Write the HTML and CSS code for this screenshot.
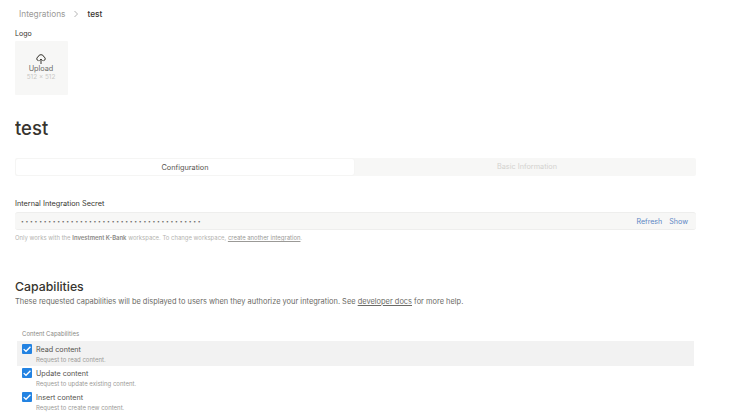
FILE: index.html
```html
<!DOCTYPE html>
<html lang="en">
<head>
<meta charset="utf-8">
<title>test</title>
<link rel="stylesheet" href="styles.css">
</head>
<body>
<div class="page">
  <nav class="crumbs">
    <span class="crumb-link">Integrations</span>
    <svg class="crumb-sep" width="6" height="8" viewBox="0 0 6 8"><path d="M1.5 1l3 3-3 3" fill="none" stroke="#aaa" stroke-width="0.9"/></svg>
    <span class="crumb-current">test</span>
  </nav>
  <div class="logo-label">Logo</div>
  <div class="logo-box">
    <svg class="upload-icon" width="10" height="11" viewBox="0 0 10 11"><path d="M2.7 6.6H2.4a1.9 1.9 0 0 1-.3-3.7A3 3 0 0 1 7.9 2.9a1.9 1.9 0 0 1-.3 3.7H7.3M5 10V5.2M3.4 6.7 5 5.1l1.6 1.6" fill="none" stroke="#37352f" stroke-width="1"/></svg>
    <span class="upload-text">Upload</span>
    <span class="upload-size">512 x 512</span>
  </div>
  <h1 class="title">test</h1>
  <div class="tabs">
    <div class="tab tab-active">Configuration</div>
    <div class="tab tab-idle">Basic Information</div>
  </div>
  <div class="field-label">Internal Integration Secret</div>
  <div class="secret">
    <span class="dots">••••••••••••••••••••••••••••••••••••••••</span>
    <span class="secret-actions"><span>Refresh</span><span>Show</span></span>
  </div>
  <p class="hint">Only works with the <b>Investment K-Bank</b> workspace. To change workspace, <u>create another integration</u>.</p>
  <h2 class="section">Capabilities</h2>
  <p class="section-desc">These requested capabilities will be displayed to users when they authorize your integration. See <u>developer docs</u> for more help.</p>
  <div class="group-label">Content Capabilities</div>
  <div class="cap cap-hover">
    <span class="check"><svg width="10" height="10" viewBox="0 0 9 9"><path d="M1.5 4.6 3.6 6.6 7.6 2.4" fill="none" stroke="#fff" stroke-width="1.2"/></svg></span>
    <div class="cap-text"><div class="cap-name">Read content</div><div class="cap-desc">Request to read content.</div></div>
  </div>
  <div class="cap">
    <span class="check"><svg width="10" height="10" viewBox="0 0 9 9"><path d="M1.5 4.6 3.6 6.6 7.6 2.4" fill="none" stroke="#fff" stroke-width="1.2"/></svg></span>
    <div class="cap-text"><div class="cap-name">Update content</div><div class="cap-desc">Request to update existing content.</div></div>
  </div>
  <div class="cap">
    <span class="check"><svg width="10" height="10" viewBox="0 0 9 9"><path d="M1.5 4.6 3.6 6.6 7.6 2.4" fill="none" stroke="#fff" stroke-width="1.2"/></svg></span>
    <div class="cap-text"><div class="cap-name">Insert content</div><div class="cap-desc">Request to create new content.</div></div>
  </div>
</div>
</body>
</html>
```
FILE: styles.css
```css
html, body {
  margin: 0;
  padding: 0;
  background: #fff;
  overflow: hidden;
}
body {
  font-family: Inter, "Liberation Sans", sans-serif;
  color: #37352f;
}
.page {
  width: 681px;
  height: 420px;
  margin-left: 15px;
  overflow: hidden;
}
.crumbs {
  display: flex;
  align-items: center;
  height: 14px;
  margin-top: 7px;
  padding-left: 4px;
  font-size: 8.3px;
  line-height: 14px;
}
.crumb-link { color: #9b9a97; }
.crumb-sep { margin: 0 8px 0 8px; }
.crumb-current { font-weight: 500; }
.logo-label {
  margin-top: 7px;
  font-size: 7px;
  line-height: 12px;
}
.logo-box {
  width: 53px;
  height: 54px;
  margin-top: 1px;
  background: #f7f7f6;
  border-radius: 1px;
  display: flex;
  flex-direction: column;
  align-items: center;
  padding-top: 13px;
  box-sizing: border-box;
}
.upload-icon { display: block; margin-right: 2px; }
.upload-text { font-size: 7.3px; line-height: 9px; margin: -1px 1px 0 0; color: #6b6a66; }
.upload-size { font-size: 6.4px; line-height: 9px; color: #c9c8c5; margin: 0 1px 0 0; }
.title {
  margin: 22px 0 0;
  font-size: 18.5px;
  line-height: 23px;
  font-weight: 500;
}
.tabs {
  display: flex;
  margin-top: 18px;
  height: 18px;
  background: #f7f7f6;
  border-radius: 2px;
  font-size: 7.3px;
  line-height: 18px;
  text-align: center;
}
.tab { flex: 1; }
.tab-active {
  flex: 0 0 340px;
  background: #fff;
  border: 1px solid #f5f5f4;
  border-radius: 3px;
  box-sizing: border-box;
  line-height: 17px;
  color: #55534e;
}
.tab-idle { color: #d3d2cf; padding-left: 3px; }
.field-label {
  margin-top: 22px;
  font-size: 7.3px;
  line-height: 12px;
}
.secret {
  display: flex;
  justify-content: space-between;
  align-items: center;
  height: 18px;
  box-sizing: border-box;
  margin-top: 2px;
  padding: 0 8px 0 6px;
  background: #f7f7f6;
  border-bottom: 1px solid #eeeeed;
  border-top: 1px solid #eeeeed;
  border-radius: 3px;
  font-size: 7.1px;
}
.dots { color: #6b6a66; font-size: 5px; letter-spacing: 1.72px; }
.secret-actions { display: flex; gap: 7px; color: #5b86c4; }
.hint {
  margin: 3px 0 0;
  font-size: 5.95px;
  line-height: 9px;
  color: #b4b3af;
}
.hint b { color: #8a8985; font-weight: 600; }
.hint u { color: #9b9a97; }
.section {
  margin: 36px 0 0;
  font-size: 12.3px;
  line-height: 18px;
  font-weight: 500;
}
.section-desc {
  margin: -1px 0 0;
  font-size: 7.45px;
  line-height: 13px;
  color: #6b6a66;
}
.group-label {
  margin: 20px 0 0 7px;
  font-size: 6px;
  line-height: 12px;
  color: #8a8985;
}
.cap {
  display: flex;
  gap: 4px;
  width: 677px;
  height: 24px;
  margin-left: 2px;
  padding: 3px 0 0 5px;
  box-sizing: border-box;
}
.cap-hover { background: #f2f2f2; margin-top: 1px; margin-bottom: -1px; height: 25px; }
.check {
  flex: none;
  width: 10px;
  height: 10px;
  background: #2383e2;
  border-radius: 1px;
  display: flex;
}
.cap-name { font-size: 7.2px; line-height: 11px; color: #55534e; }
.cap-desc { font-size: 6px; line-height: 10px; color: #9b9a97; }
```
